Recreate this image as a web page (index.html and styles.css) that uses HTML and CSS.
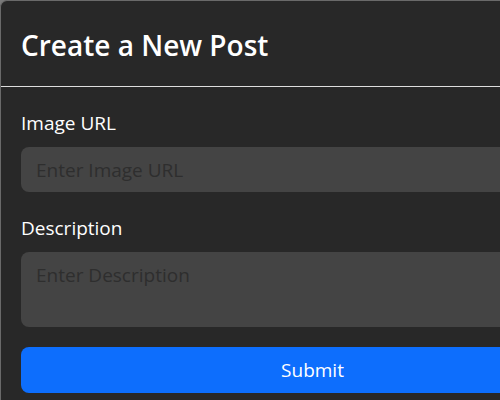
FILE: index.html
```html
<!DOCTYPE html>
<html>
<head>
<meta charset="utf-8">
<link rel="stylesheet" href="styles.css">
</head>
<body>
<div class="modal">
  <div class="modal-header">
    <h2 class="title">Create a New Post</h2>
  </div>
  <form class="modal-body">
    <div class="field">
      <label class="label">Image URL</label>
      <input class="input" type="text" placeholder="Enter Image URL">
    </div>
    <div class="field last">
      <label class="label">Description</label>
      <textarea class="input textarea" placeholder="Enter Description"></textarea>
    </div>
    <button class="submit" type="button">Submit</button>
  </form>
</div>
</body>
</html>
```

FILE: styles.css
```css
html, body {
  margin: 0;
  padding: 0;
  width: 500px;
  height: 400px;
  overflow: hidden;
  background: #7a7a7a;
}
.modal {
  width: 640px;
  height: 420px;
  box-sizing: border-box;
  background: #282828;
  border-top: 1px solid #6a6a6a;
  border-left: 1px solid #6a6a6a;
  border-top-left-radius: 7px;
  font-family: "Open Sans", "Noto Sans", sans-serif;
  color: #fff;
}
.modal-header {
  height: 86px;
  box-sizing: border-box;
  padding: 0 20px;
  display: flex;
  align-items: center;
  border-bottom: 1px solid #dedede;
}
.title {
  margin: 0;
  font-size: 28px;
  font-weight: 600;
  line-height: 1;
  padding-top: 2px;
}
.modal-body {
  padding: 21px 20px;
  display: flex;
  flex-direction: column;
}
.field {
  display: flex;
  flex-direction: column;
  margin-bottom: 21px;
}
.field.last {
  margin-bottom: 20px;
}
.label {
  font-size: 19px;
  line-height: 30px;
  margin-bottom: 9px;
}
.input {
  box-sizing: border-box;
  width: 583px;
  height: 45px;
  border: none;
  border-radius: 8px;
  background: #444;
  padding: 0 15px;
  font-family: "Open Sans", "Noto Sans", sans-serif;
  font-size: 19px;
  color: #fff;
  outline: none;
}
.input::placeholder {
  color: #2e2e2e;
}
.textarea {
  height: 75px;
  padding: 10px 15px;
  resize: none;
  line-height: 26px;
}
.submit {
  width: 583px;
  height: 46px;
  border: none;
  border-radius: 8px;
  background: #0d6efd;
  color: #fff;
  font-family: "Open Sans", "Noto Sans", sans-serif;
  font-size: 19px;
  padding: 0;
}
```
